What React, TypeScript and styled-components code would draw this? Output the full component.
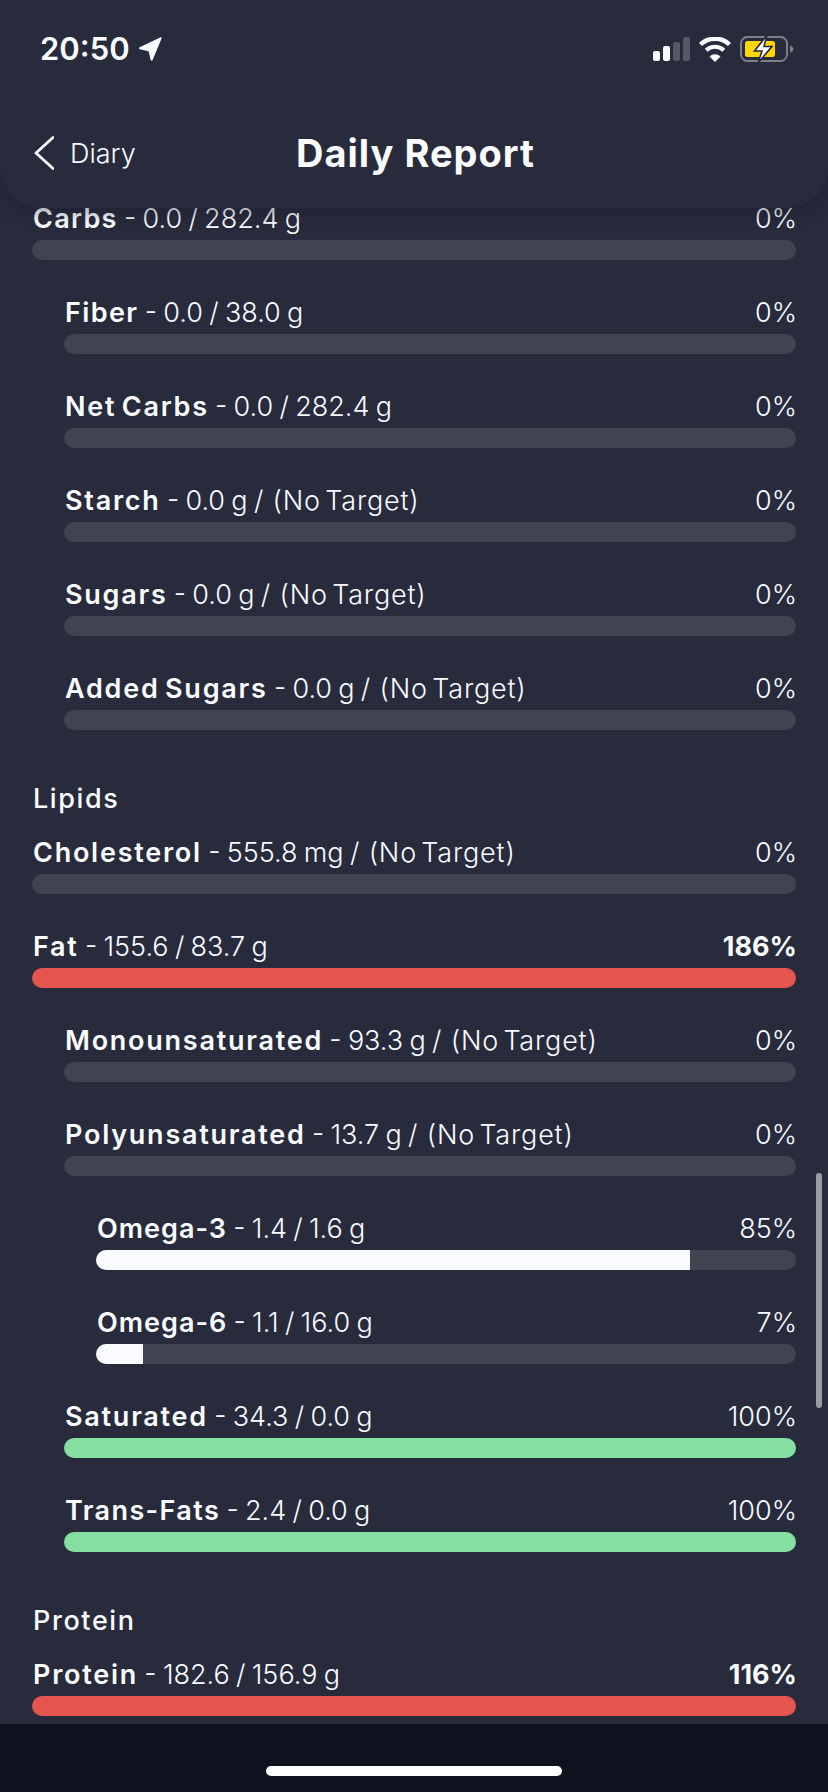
import React from "react";
import styled, { createGlobalStyle } from "styled-components";

const GlobalStyle = createGlobalStyle`
  html, body {
    margin: 0;
    padding: 0;
    background: #282b3c;
  }
  * {
    box-sizing: border-box;
  }
`;

type Nutrient = {
  name: string;
  detail: string;
  percent: string;
  noTarget?: boolean;
  fill?: number;
  tone?: "white" | "red" | "green";
  level?: number;
  over?: boolean;
  tracking?: number;
};

type Section = {
  title?: string;
  rows: Nutrient[];
};

const sections: Section[] = [
  {
    rows: [
      { name: "Carbs", detail: "0.0 / 282.4 g", percent: "0%", tracking: 1.3 },
      { name: "Fiber", detail: "0.0 / 38.0 g", percent: "0%", level: 1, tracking: 1.4 },
      { name: "Net Carbs", detail: "0.0 / 282.4 g", percent: "0%", level: 1 },
      { name: "Starch", detail: "0.0 g /", noTarget: true, percent: "0%", level: 1 },
      { name: "Sugars", detail: "0.0 g /", noTarget: true, percent: "0%", level: 1 },
      { name: "Added Sugars", detail: "0.0 g /", noTarget: true, percent: "0%", level: 1 },
    ],
  },
  {
    title: "Lipids",
    rows: [
      { name: "Cholesterol", detail: "555.8 mg /", noTarget: true, percent: "0%" },
      { name: "Fat", detail: "155.6 / 83.7 g", percent: "186%", fill: 100, tone: "red", over: true },
      { name: "Monounsaturated", detail: "93.3 g /", noTarget: true, percent: "0%", level: 1 },
      { name: "Polyunsaturated", detail: "13.7 g /", noTarget: true, percent: "0%", level: 1 },
      { name: "Omega-3", detail: "1.4 / 1.6 g", percent: "85%", fill: 84.8, tone: "white", level: 2, tracking: 1 },
      { name: "Omega-6", detail: "1.1 / 16.0 g", percent: "7%", fill: 6.7, tone: "white", level: 2, tracking: 1 },
      { name: "Saturated", detail: "34.3 / 0.0 g", percent: "100%", fill: 100, tone: "green", level: 1 },
      { name: "Trans-Fats", detail: "2.4 / 0.0 g", percent: "100%", fill: 100, tone: "green", level: 1, tracking: 1.4 },
    ],
  },
  {
    title: "Protein",
    rows: [
      { name: "Protein", detail: "182.6 / 156.9 g", percent: "116%", fill: 100, tone: "red", over: true },
    ],
  },
];

const toneColors = {
  white: "#fafbff",
  red: "#e5554f",
  green: "#85dfa0",
};

const Phone = styled.div`
  position: relative;
  width: 828px;
  height: 1792px;
  display: flex;
  flex-direction: column;
  overflow: hidden;
  background: #282b3c;
  color: #fafbff;
  font-family: Inter, "Liberation Sans", sans-serif;
`;

const Header = styled.header`
  position: relative;
  z-index: 2;
  flex: none;
  height: 208px;
  padding: 0 34px;
  background: #282b3c;
  border-radius: 0 0 40px 40px;
  box-shadow: 0 6px 14px rgba(20, 22, 36, 0.35);
`;

const StatusBar = styled.div`
  height: 123px;
  padding: 29px 0 0 6px;
  display: flex;
  justify-content: space-between;
  align-items: flex-start;
`;

const TimeGroup = styled.div`
  display: flex;
  align-items: center;
  gap: 8px;
`;

const Time = styled.span`
  font-size: 31px;
  line-height: 40px;
  font-weight: 600;
`;

const StatusIcons = styled.div`
  display: flex;
  align-items: center;
  gap: 9px;
  height: 40px;
`;

const NavRow = styled.div`
  position: relative;
  display: flex;
  align-items: center;
  justify-content: center;
  height: 60px;
`;

const BackLink = styled.div`
  position: absolute;
  left: 0;
  top: 0;
  bottom: 0;
  display: flex;
  align-items: center;
  gap: 16px;
  font-size: 27px;
  font-weight: 300;
`;

const Title = styled.h1`
  margin: 0 0 0 3px;
  font-size: 38px;
  line-height: 60px;
  font-weight: 700;
  letter-spacing: 1px;
`;

const Content = styled.main`
  flex: 1;
  min-height: 0;
  margin-top: -6px;
  padding: 0 32px;
`;

const SectionTitle = styled.h2`
  margin: 0 0 0 1px;
  height: 70px;
  padding-top: 16px;
  font-size: 27px;
  line-height: 34px;
  font-weight: 500;
  letter-spacing: 1.6px;
`;

const Row = styled.div<{ $level: number }>`
  margin-left: ${(p) => p.$level * 32}px;
  margin-bottom: 36px;
`;

const RowLabels = styled.div`
  display: flex;
  justify-content: space-between;
  height: 34px;
  margin: 0 -1px 4px 1px;
  font-size: 27px;
  line-height: 34px;
  font-weight: 300;
  word-spacing: -1.3px;
`;

const Name = styled.span<{ $tracking?: number }>`
  font-weight: 600;
  letter-spacing: ${(p) => p.$tracking ?? 1.75}px;
  word-spacing: -3px;
`;

const NoTarget = styled.span`
  margin-left: 3px;
  letter-spacing: 0.8px;
  word-spacing: -4px;
`;

const Percent = styled.span<{ $over?: boolean }>`
  font-weight: ${(p) => (p.$over ? 700 : 300)};
`;

const Track = styled.div`
  height: 20px;
  border-radius: 10px;
  overflow: hidden;
  background: #414351;
`;

const Fill = styled.div<{ $tone: "white" | "red" | "green" }>`
  height: 100%;
  background: ${(p) => toneColors[p.$tone]};
`;

const Scrollbar = styled.div`
  position: absolute;
  top: 1173px;
  left: 816px;
  width: 6px;
  height: 235px;
  border-radius: 3px;
  background: #9a9ca5;
`;

const Footer = styled.footer`
  position: relative;
  z-index: 1;
  flex: none;
  height: 68px;
  padding-top: 42px;
  display: flex;
  justify-content: center;
  align-items: flex-start;
  background: #10111f;
`;

const HomeIndicator = styled.div`
  width: 296px;
  height: 10px;
  border-radius: 5px;
  background: #ffffff;
`;

const LocationArrow = () => (
  <svg width="25" height="25" viewBox="0 0 26 26">
    <path
      d="M24.500 1.600 15.200 24c-.4 1-1.800.9-2-.1L11 14.900 1.900 12.700c-1-.2-1.200-1.600-.2-2L23.100.4c.9-.4 1.800.4 1.400 1.200Z"
      fill="#fafbff"
    />
  </svg>
);

const SignalBars = () => (
  <svg width="37" height="24" viewBox="0 0 37 24">
    <rect x="0" y="14" width="7" height="10" rx="2" fill="#fafbff" />
    <rect x="10" y="9" width="7" height="15" rx="2" fill="#fafbff" />
    <rect x="20" y="5" width="7" height="19" rx="2" fill="#555867" />
    <rect x="30" y="0" width="7" height="24" rx="2" fill="#555867" />
  </svg>
);

const WifiIcon = () => (
  <svg width="32" height="25" viewBox="0 0 32 25">
    <path d="M1.500 7.500a21 21 0 0 1 29 0" fill="none" stroke="#fafbff" strokeWidth="4.400" />
    <path d="M7.200 13.200a13 13 0 0 1 17.600 0" fill="none" stroke="#fafbff" strokeWidth="4.200" />
    <path d="M10.500 19.500 16 25l5.500-5.500a8 8 0 0 0-11 0Z" fill="#fafbff" />
  </svg>
);

const BatteryIcon = () => (
  <svg width="54" height="26" viewBox="0 0 54 26">
    <rect x="1" y="1" width="46" height="24" rx="6.500" fill="none" stroke="#7d7f8b" strokeWidth="2" />
    <rect x="5" y="5" width="30" height="16" rx="2.500" fill="#ffd60a" />
    <path d="M50 9.500c2.200.6 3.500 2 3.500 3.500s-1.300 2.900-3.500 3.500Z" fill="#7d7f8b" />
    <path
      d="M27 -1 14.500 15h7.500L18 27 32 10.500h-8L27 -1Z"
      fill="#fafbff"
      stroke="#282b3c"
      strokeWidth="1.600"
    />
  </svg>
);

const ChevronLeft = () => (
  <svg width="20" height="34" viewBox="0 0 20 34">
    <path
      d="M19 1.500 2 17l17 15.500"
      fill="none"
      stroke="#fafbff"
      strokeWidth="2.800"
      strokeLinecap="round"
      strokeLinejoin="round"
    />
  </svg>
);

const NutrientRow = ({ row }: { row: Nutrient }) => (
  <Row $level={row.level ?? 0}>
    <RowLabels>
      <span>
        <Name $tracking={row.tracking}>{row.name}</Name> - {row.detail}{" "}
        {row.noTarget && <NoTarget>(No Target)</NoTarget>}
      </span>
      <Percent $over={row.over}>{row.percent}</Percent>
    </RowLabels>
    <Track>
      {row.fill && row.tone ? (
        <Fill $tone={row.tone} style={{ width: `${row.fill}%` }} />
      ) : null}
    </Track>
  </Row>
);

export default function App() {
  return (
    <Phone>
      <GlobalStyle />
      <Header>
        <StatusBar>
          <TimeGroup>
            <Time>20:50</Time>
            <LocationArrow />
          </TimeGroup>
          <StatusIcons>
            <SignalBars />
            <WifiIcon />
            <BatteryIcon />
          </StatusIcons>
        </StatusBar>
        <NavRow>
          <BackLink>
            <ChevronLeft />
            Diary
          </BackLink>
          <Title>Daily Report</Title>
        </NavRow>
      </Header>
      <Content>
        {sections.map((section) => (
          <section key={section.title ?? "carbs"}>
            {section.title && <SectionTitle>{section.title}</SectionTitle>}
            {section.rows.map((row) => (
              <NutrientRow key={row.name} row={row} />
            ))}
          </section>
        ))}
      </Content>
      <Scrollbar />
      <Footer>
        <HomeIndicator />
      </Footer>
    </Phone>
  );
}
